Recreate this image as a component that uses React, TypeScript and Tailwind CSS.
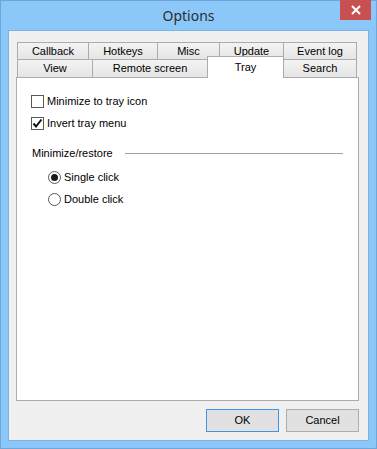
import React from "react";

const font = { fontFamily: '"Liberation Sans", Arial, sans-serif' };

function Checkbox({ checked }: { checked?: boolean }) {
  return (
    <div className="w-[13px] h-[13px] border border-[#5a5a5a] bg-white flex items-center justify-center shrink-0">
      {checked && (
        <svg width="11" height="11" viewBox="0 0 11 11">
          <path d="M1.5 5.5 L4 8.5 L9.5 1.5" fill="none" stroke="#111" strokeWidth="2" />
        </svg>
      )}
    </div>
  );
}

function Radio({ checked }: { checked?: boolean }) {
  return (
    <div className="w-[13px] h-[13px] rounded-full border border-[#5a5a5a] bg-white flex items-center justify-center shrink-0">
      {checked && <div className="w-[7px] h-[7px] rounded-full bg-[#1a1a1a]" />}
    </div>
  );
}

const tabBase =
  "h-full flex items-center justify-center border border-b-0 border-[#acacac] bg-gradient-to-b from-[#f3f3f3] to-[#e5e5e5] text-[11px] leading-[13px] text-black";

export default function App() {
  return (
    <div
      className="w-[377px] h-[449px] bg-[#8bc7f8] border border-[#6fa6d8] flex flex-col select-none"
      style={font}
    >
      {/* Title bar */}
      <div className="h-[29px] grid grid-cols-[1fr_auto_1fr] items-start">
        <div />
        <div
          className="h-[29px] flex items-center text-[14px] text-[#2e2e2e]"
          style={{ fontFamily: '"Noto Sans", "Open Sans", sans-serif' }}
        >
          Options
        </div>
        <div className="flex justify-end">
          <div className="-mt-px mr-[5px] w-[31px] h-[20px] bg-[#c75050] flex items-center justify-center">
            <svg width="10" height="10" viewBox="0 0 10 10">
              <path d="M1 1 L9 9 M9 1 L1 9" stroke="#fff" strokeWidth="2" />
            </svg>
          </div>
        </div>
      </div>

      {/* Client area */}
      <div className="mx-[7px] h-[411px] border border-[#7db3e4] bg-[#f0f0f0] flex flex-col">
        {/* Tabs */}
        <div className="pt-[11px] pl-[8px]">
          <div className="flex h-[17px]">
            <div className={`${tabBase} w-[72px]`}>Callback</div>
            <div className={`${tabBase} w-[70px] -ml-px`}>Hotkeys</div>
            <div className={`${tabBase} w-[63px] -ml-px`}>Misc</div>
            <div className={`${tabBase} w-[65px] -ml-px`}>Update</div>
            <div className={`${tabBase} w-[74px] -ml-px`}>Event log</div>
          </div>
          <div className="flex h-[18px] items-start">
            <div className={`${tabBase} w-[76px]`}>View</div>
            <div className={`${tabBase} w-[116px] -ml-px`}>Remote screen</div>
            <div className="relative z-10 -ml-px -mt-[3px] w-[77px] h-[22px] bg-white border border-b-0 border-[#acacac] flex justify-center pt-[4px] text-[11px] leading-[13px] text-black">
              Tray
            </div>
            <div className={`${tabBase} w-[74px] -ml-px`}>Search</div>
          </div>
        </div>

        {/* Panel */}
        <div className="ml-[7px] mr-[9px] h-[324px] bg-white border border-[#adadad] text-[11px] leading-[13px] text-black">
          <div className="pt-[17px] pl-[14px] pr-[15px]">
            <div className="flex items-center gap-[3px] h-[13px]">
              <Checkbox />
              <span>Minimize to tray icon</span>
            </div>
            <div className="flex items-center gap-[3px] h-[13px] mt-[9px]">
              <Checkbox checked />
              <span>Invert tray menu</span>
            </div>
            <div className="flex items-center h-[13px] mt-[17px] pl-[1px]">
              <span>Minimize/restore</span>
              <div className="flex-1 ml-[12px] h-px bg-[#a0a0a0]" />
            </div>
            <div className="pl-[17px]">
              <div className="flex items-center gap-[3px] h-[13px] mt-[11px]">
                <Radio checked />
                <span>Single click</span>
              </div>
              <div className="flex items-center gap-[3px] h-[13px] mt-[9px]">
                <Radio />
                <span>Double click</span>
              </div>
            </div>
          </div>
        </div>

        {/* Buttons */}
        <div className="mt-[8px] pr-[9px] flex justify-end gap-[7px]">
          <div className="w-[73px] h-[23px] border border-[#3d95e8] bg-[#e1e1e1] flex items-center justify-center text-[11px] text-black">
            OK
          </div>
          <div className="w-[73px] h-[23px] border border-[#adadad] bg-[#e1e1e1] flex items-center justify-center text-[11px] text-black">
            Cancel
          </div>
        </div>
      </div>
    </div>
  );
}
